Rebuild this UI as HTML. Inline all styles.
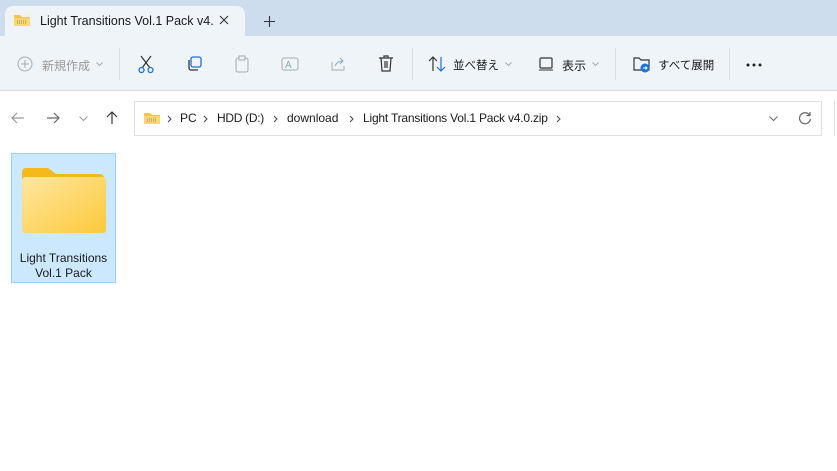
<!DOCTYPE html>
<html><head><meta charset="utf-8"><style>
*{margin:0;padding:0;box-sizing:border-box}
body{width:837px;height:471px;background:#fff;font-family:"Liberation Sans","Noto Sans CJK JP",sans-serif;position:relative;overflow:hidden;color:#1a1a1a}
.tabbar{position:absolute;left:0;top:0;width:837px;height:36px;background:#cddded}
.tab{position:absolute;left:5px;top:6px;width:240px;height:32px;background:#eff4f9;border-radius:8px 8px 0 0}
.tool{position:absolute;left:0;top:36px;width:837px;height:55px;background:#eff4f9;border-bottom:1px solid #d3dbe3}
.t{position:absolute;font-size:12px;white-space:nowrap}
.a{position:absolute;top:111px;font-size:12px;white-space:nowrap}
.sep{position:absolute;top:48px;width:1px;height:32px;background:#d9dee4}
.addr{position:absolute;left:134px;top:101px;width:688px;height:35px;border:1px solid #e0e0e0;background:#fff}
.sel{position:absolute;left:11px;top:153px;width:105px;height:130px;background:#cce8ff;border:1px solid #99d1ff}
svg{position:absolute}
</style></head><body>
<div class="tabbar"></div>
<div class="tab"></div>
<svg style="left:13px;top:13px" width="18" height="14" viewBox="0 0 18 14"><path d="M1 2h6l2 2h8v9H1z" fill="#f5c542"/><rect x="1" y="5" width="16" height="8" fill="#fcd76a"/><path d="M4 8h10M4 10h10" stroke="#888" stroke-width="1" stroke-dasharray="1 1"/></svg>
<div class="t" style="left:40px;top:14px;font-size:12.5px">Light Transitions Vol.1 Pack v4.</div>
<svg style="left:219px;top:15px" width="10" height="10"><path d="M1 1l8 8M9 1l-8 8" stroke="#333" stroke-width="1.1"/></svg>
<svg style="left:264px;top:16px" width="11" height="11"><path d="M5.5 0v11M0 5.5h11" stroke="#333" stroke-width="1.1"/></svg>
<div class="tool"></div>
<svg style="left:17px;top:56px" width="16" height="16"><circle cx="8" cy="8" r="7" fill="none" stroke="#aaa"/><path d="M8 4v8M4 8h8" stroke="#aaa"/></svg>
<div class="t" style="left:42px;top:57px;color:#999">新規作成</div>
<svg style="left:96px;top:62px" width="7" height="5"><path d="M0.5 0.5l3 3 3-3" fill="none" stroke="#aaa"/></svg>
<div class="sep" style="left:119px"></div>
<svg style="left:137px;top:54px" width="18" height="20"><path d="M4 2l9 12M14 2l-9 12" stroke="#333" stroke-width="1.2"/><circle cx="4.5" cy="16" r="2.5" fill="none" stroke="#1a73d8" stroke-width="1.3"/><circle cx="13.5" cy="16" r="2.5" fill="none" stroke="#1a73d8" stroke-width="1.3"/></svg>
<svg style="left:186px;top:56px" width="16" height="16"><rect x="5" y="1" width="10" height="10" rx="2" fill="none" stroke="#1a73d8" stroke-width="1.3"/><path d="M3 4v8a2 2 0 0 0 2 2h7" fill="none" stroke="#333" stroke-width="1.3"/></svg>
<svg style="left:234px;top:55px" width="16" height="18"><rect x="2" y="3" width="12" height="14" rx="2" fill="none" stroke="#aaa"/><rect x="5" y="1" width="6" height="4" fill="#eff4f9" stroke="#aaa"/></svg>
<svg style="left:281px;top:56px" width="18" height="16"><rect x="1" y="2" width="16" height="12" rx="2" fill="none" stroke="#aaa"/><text x="4" y="12" font-size="10" fill="#8ab">A</text></svg>
<svg style="left:330px;top:56px" width="16" height="16"><path d="M2 6v8h12v-4" fill="none" stroke="#aaa"/><path d="M5 10q2-5 8-5M10 2l3 3-3 3" fill="none" stroke="#8ab"/></svg>
<svg style="left:378px;top:55px" width="16" height="18"><path d="M1 3h14M6 3V1h4v2M3 3l1 13h8l1-13M7 6v7M9 6v7" fill="none" stroke="#333" stroke-width="1.2"/></svg>
<div class="sep" style="left:412px"></div>
<svg style="left:428px;top:55px" width="18" height="18"><path d="M5 16V2M1 6l4-4 4 4" fill="none" stroke="#333" stroke-width="1.2"/><path d="M13 2v14M9 12l4 4 4-4" fill="none" stroke="#1a73d8" stroke-width="1.2"/></svg>
<div class="t" style="left:453px;top:57px;font-size:11.5px">並べ替え</div>
<svg style="left:505px;top:62px" width="7" height="5"><path d="M0.5 0.5l3 3 3-3" fill="none" stroke="#aaa"/></svg>
<svg style="left:539px;top:57px" width="16" height="14"><rect x="1" y="1" width="12" height="10" rx="1" fill="none" stroke="#333" stroke-width="1.2"/><path d="M0 13h14" stroke="#333"/></svg>
<div class="t" style="left:562px;top:57px">表示</div>
<svg style="left:592px;top:62px" width="7" height="5"><path d="M0.5 0.5l3 3 3-3" fill="none" stroke="#aaa"/></svg>
<div class="sep" style="left:615px"></div>
<svg style="left:633px;top:55px" width="18" height="18"><path d="M1 3h5l2 2h8v10H1z" fill="none" stroke="#333" stroke-width="1.2"/><circle cx="12" cy="13" r="4.5" fill="#1a73d8"/><path d="M10 13h4M12.5 11.5l1.5 1.5-1.5 1.5" stroke="#fff" fill="none"/></svg>
<div class="t" style="left:658px;top:57px;font-size:11.5px">すべて展開</div>
<div class="sep" style="left:729px"></div>
<svg style="left:746px;top:63px" width="18" height="4"><circle cx="2" cy="2" r="1.5" fill="#222"/><circle cx="8" cy="2" r="1.5" fill="#222"/><circle cx="14" cy="2" r="1.5" fill="#222"/></svg>
<svg style="left:11px;top:112px" width="14" height="12"><path d="M13 6H1M6 1L1 6l5 5" fill="none" stroke="#999" stroke-width="1.2"/></svg>
<svg style="left:46px;top:112px" width="14" height="12"><path d="M1 6h12M8 1l5 5-5 5" fill="none" stroke="#666" stroke-width="1.2"/></svg>
<svg style="left:79px;top:116px" width="9" height="6"><path d="M0.5 0.5l4 4 4-4" fill="none" stroke="#999"/></svg>
<svg style="left:106px;top:111px" width="12" height="14"><path d="M6 13V1M1 6l5-5 5 5" fill="none" stroke="#333" stroke-width="1.2"/></svg>
<div class="addr"></div>
<svg style="left:143px;top:111px" width="18" height="14" viewBox="0 0 18 14"><path d="M1 2h6l2 2h8v9H1z" fill="#f5c542"/><rect x="1" y="5" width="16" height="8" fill="#fcd76a"/><path d="M4 8h10M4 10h10" stroke="#888" stroke-width="1" stroke-dasharray="1 1"/></svg>
<svg style="left:167px;top:115px" width="5" height="8"><path d="M1 1l3 3-3 3" fill="none" stroke="#444"/></svg>
<div class="a" style="left:180px">PC</div>
<svg style="left:203px;top:115px" width="5" height="8"><path d="M1 1l3 3-3 3" fill="none" stroke="#444"/></svg>
<div class="a" style="left:217px;letter-spacing:-0.3px">HDD (D:)</div>
<svg style="left:273px;top:115px" width="5" height="8"><path d="M1 1l3 3-3 3" fill="none" stroke="#444"/></svg>
<div class="a" style="left:287px">download</div>
<svg style="left:349px;top:115px" width="5" height="8"><path d="M1 1l3 3-3 3" fill="none" stroke="#444"/></svg>
<div class="a" style="left:363px;letter-spacing:-0.2px">Light Transitions Vol.1 Pack v4.0.zip</div>
<svg style="left:556px;top:115px" width="5" height="8"><path d="M1 1l3 3-3 3" fill="none" stroke="#444"/></svg>
<svg style="left:769px;top:116px" width="9" height="6"><path d="M0.5 0.5l4 4 4-4" fill="none" stroke="#666"/></svg>
<svg style="left:798px;top:111px" width="14" height="14"><path d="M11.5 4A5.5 5.5 0 1 0 12.5 8" fill="none" stroke="#666" stroke-width="1.2"/><path d="M12 1v3.5H8.5" fill="none" stroke="#666" stroke-width="1.2"/></svg>
<div style="position:absolute;left:834px;top:101px;width:3px;height:35px;border-left:1px solid #e0e0e0"></div>
<div class="sel"></div>
<svg style="left:20px;top:166px" width="86" height="68" viewBox="0 0 86 68"><path d="M2 6a4 4 0 0 1 4-4h22l8 6h44a4 4 0 0 1 4 4v10H2z" fill="#f5b91c"/><rect x="2" y="11" width="84" height="56" rx="3" fill="url(#g)"/><defs><linearGradient id="g" x1="0" y1="0" x2="1" y2="1"><stop offset="0" stop-color="#ffe7a0"/><stop offset="1" stop-color="#fcc93a"/></linearGradient></defs></svg>
<div class="t" style="left:11px;top:251px;width:105px;text-align:center;line-height:15px">Light Transitions<br>Vol.1 Pack</div>
</body></html>
